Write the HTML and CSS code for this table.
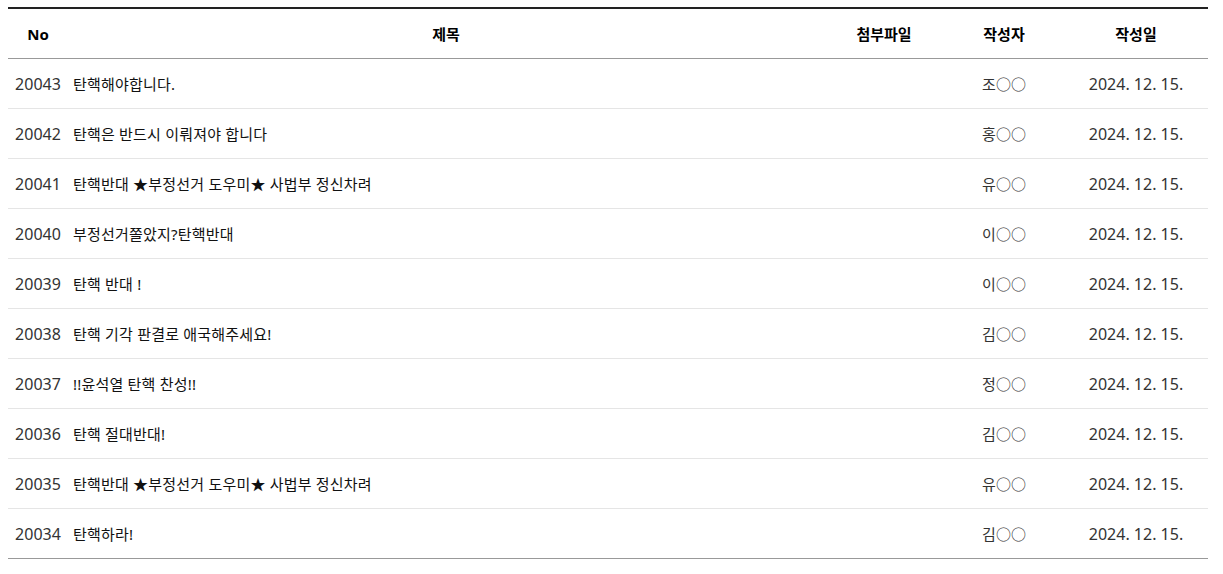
FILE: index.html
```html
<!DOCTYPE html>
<html lang="ko">
<head>
<meta charset="utf-8">
<title>게시판</title>
<link rel="stylesheet" href="styles.css">
</head>
<body>
<table class="board">
  <colgroup>
    <col class="c-no">
    <col class="c-title">
    <col class="c-file">
    <col class="c-writer">
    <col class="c-date">
  </colgroup>
  <thead>
    <tr>
      <th>No</th>
      <th>제목</th>
      <th>첨부파일</th>
      <th>작성자</th>
      <th>작성일</th>
    </tr>
  </thead>
  <tbody>
    <tr><td class="no">20043</td><td class="title">탄핵해야합니다.</td><td></td><td class="writer">조○○</td><td class="date">2024. 12. 15.</td></tr>
    <tr><td class="no">20042</td><td class="title">탄핵은 반드시 이뤄져야 합니다</td><td></td><td class="writer">홍○○</td><td class="date">2024. 12. 15.</td></tr>
    <tr><td class="no">20041</td><td class="title">탄핵반대 ★부정선거 도우미★ 사법부 정신차려</td><td></td><td class="writer">유○○</td><td class="date">2024. 12. 15.</td></tr>
    <tr><td class="no">20040</td><td class="title">부정선거쫄았지?탄핵반대</td><td></td><td class="writer">이○○</td><td class="date">2024. 12. 15.</td></tr>
    <tr><td class="no">20039</td><td class="title">탄핵 반대 !</td><td></td><td class="writer">이○○</td><td class="date">2024. 12. 15.</td></tr>
    <tr><td class="no">20038</td><td class="title">탄핵 기각 판결로 애국해주세요!</td><td></td><td class="writer">김○○</td><td class="date">2024. 12. 15.</td></tr>
    <tr><td class="no">20037</td><td class="title">!!윤석열 탄핵 찬성!!</td><td></td><td class="writer">정○○</td><td class="date">2024. 12. 15.</td></tr>
    <tr><td class="no">20036</td><td class="title">탄핵 절대반대!</td><td></td><td class="writer">김○○</td><td class="date">2024. 12. 15.</td></tr>
    <tr><td class="no">20035</td><td class="title">탄핵반대 ★부정선거 도우미★ 사법부 정신차려</td><td></td><td class="writer">유○○</td><td class="date">2024. 12. 15.</td></tr>
    <tr><td class="no">20034</td><td class="title">탄핵하라!</td><td></td><td class="writer">김○○</td><td class="date">2024. 12. 15.</td></tr>
  </tbody>
</table>
</body>
</html>
```
FILE: styles.css
```css
html, body {
  background: #fff;
}
body {
  margin: 7px 8px 8px;
  font-family: "Noto Sans", "Noto Sans CJK KR", sans-serif;
  font-size: 15px;
  color: #222;
}
.board {
  width: 1200px;
  border-collapse: collapse;
  table-layout: fixed;
  border-top: 2px solid #222;
  border-bottom: 1px solid #999;
}
.c-no { width: 60px; }
.c-file { width: 120px; }
.c-writer { width: 120px; }
.c-date { width: 144px; }
.board th {
  height: 49px;
  padding: 0;
  font-weight: bold;
  color: #000;
  text-align: center;
  border-bottom: 1px solid #999;
}
.board td {
  height: 49px;
  padding: 0;
  text-align: center;
  border-bottom: 1px solid #e5e5e5;
  color: #333;
}
.board tbody tr:last-child td {
  border-bottom: 1px solid #999;
}
.board td.no,
.board td.date {
  font-size: 16px;
  color: #333;
}
.board td.title {
  text-align: left;
  padding-left: 5px;
  color: #111;
  letter-spacing: 0.2px;
}
.board td.writer {
  color: #333;
}
```
